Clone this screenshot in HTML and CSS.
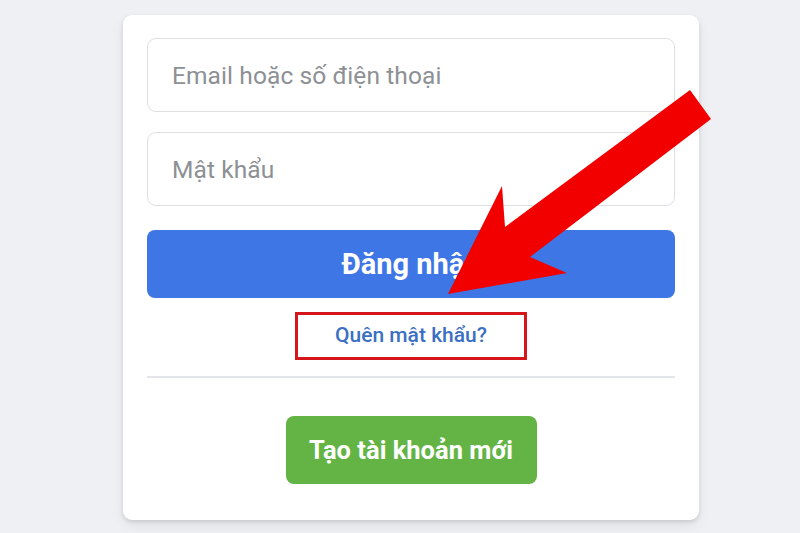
FILE: index.html
```html
<!DOCTYPE html>
<html lang="vi">
<head>
<meta charset="utf-8">
<link rel="stylesheet" href="styles.css">
</head>
<body>
<div class="page">
  <div class="card">
    <div class="field"><span class="placeholder">Email hoặc số điện thoại</span></div>
    <div class="field"><span class="placeholder">Mật khẩu</span></div>
    <div class="login">Đăng nhập</div>
    <div class="forgot-row"><span class="forgot">Quên mật khẩu?</span></div>
    <div class="divider"></div>
    <div class="create-row"><span class="create">Tạo tài khoản mới</span></div>
  </div>
  <svg class="arrow" width="800" height="533" viewBox="0 0 800 533">
    <polygon points="448,294 502,186 505,227 690,90 711,119 530,257 567,273" fill="#f20000"/>
  </svg>
</div>
</body>
</html>
```

FILE: styles.css
```css
html, body {
  margin: 0;
  padding: 0;
}
body {
  background: #eef0f3;
  font-family: Roboto, "Noto Sans", sans-serif;
  width: 800px;
  height: 533px;
  overflow: hidden;
}
.page {
  position: relative;
  width: 800px;
  height: 533px;
  padding-top: 15px;
  box-sizing: border-box;
}
.card {
  margin-left: 123px;
  width: 576px;
  height: 505px;
  background: #fff;
  border-radius: 9px;
  box-shadow: 0 2px 4px rgba(0,0,0,0.12), 0 6px 14px rgba(0,0,0,0.06);
  box-sizing: border-box;
  padding: 23px 24px 0 24px;
  display: flex;
  flex-direction: column;
}
.field {
  height: 74px;
  border: 1px solid #dddfe2;
  border-radius: 9px;
  box-sizing: border-box;
  display: flex;
  align-items: center;
  padding-left: 24px;
  margin-bottom: 20px;
}
.placeholder {
  font-size: 24.5px;
  color: #8d9094;
  letter-spacing: 0.1px;
}
.login {
  margin-top: 4px;
  height: 68px;
  background: #3e76e6;
  border-radius: 8px;
  color: #fff;
  font-weight: 700;
  font-size: 29px;
  display: flex;
  align-items: center;
  justify-content: center;
}
.forgot-row {
  display: flex;
  justify-content: center;
  margin-top: 14px;
}
.forgot {
  width: 232px;
  height: 48px;
  box-sizing: border-box;
  border: 3px solid #d5161b;
  display: flex;
  align-items: center;
  justify-content: center;
  color: #3b6fc4;
  font-weight: 500;
  font-size: 21px;
  padding-bottom: 2px;
}
.divider {
  margin-top: 16px;
  height: 2px;
  background: #e3e5e8;
}
.create-row {
  display: flex;
  justify-content: center;
  margin-top: 38px;
}
.create {
  width: 251px;
  height: 68px;
  background: #63b445;
  border-radius: 8px;
  color: #fff;
  font-weight: 700;
  font-size: 25.5px;
  display: flex;
  align-items: center;
  justify-content: center;
}
.arrow {
  position: absolute;
  left: 0;
  top: 0;
}
```
